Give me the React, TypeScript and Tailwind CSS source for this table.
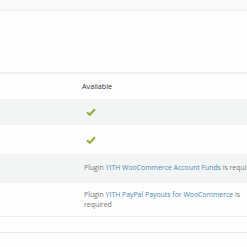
export default function App() {
  const check = (
    <svg width="10" height="8" viewBox="0 0 10 8" className="ml-[4px]">
      <path d="M1 4.2 L3.8 6.8 L9 1.2" fill="none" stroke="#8cb23c" strokeWidth="2" />
    </svg>
  );

  return (
    <div className="w-[247px] h-[247px] overflow-hidden bg-[#fdfdfd] text-[6.9px] antialiased [font-family:'Open_Sans',sans-serif] text-[#777]">
      {/* top bar */}
      <div className="h-[11px] bg-[#f9f9f9] border-b border-[#f1f1f1]" />
      <div className="h-[63px] bg-[#fdfdfd] border-b-2 border-[#f2f2f2]" />

      {/* table */}
      <div className="grid grid-cols-[82px_1fr]">
        <div className="h-[25px]" />
        <div className="h-[25px] flex items-center text-[#333] text-[7.2px]">Available</div>

        <div className="h-[26px] bg-[#f3f5f5] col-span-2 grid grid-cols-[82px_1fr]">
          <div />
          <div className="flex items-center">{check}</div>
        </div>

        <div className="h-[29px] bg-[#fdfdfd] col-span-2 grid grid-cols-[82px_1fr]">
          <div />
          <div className="flex items-center">{check}</div>
        </div>

        <div className="h-[29px] bg-[#f3f5f5] col-span-2 grid grid-cols-[82px_1fr]">
          <div />
          <div className="flex items-center pl-[2px] whitespace-nowrap">
            Plugin&nbsp;<span className="text-[#4a8bb0]">YITH WooCommerce Account Funds</span>&nbsp;is required
          </div>
        </div>

        <div className="h-[34px] bg-[#fdfdfd] col-span-2 grid grid-cols-[82px_1fr] border-b border-[#ededed]">
          <div />
          <div className="flex items-center pl-[2px]">
            <span className="w-[160px] leading-[10px]">
              Plugin <span className="text-[#4a8bb0]">YITH PayPal Payouts for WooCommerce</span> is required
            </span>
          </div>
        </div>

        <div className="h-[16px] col-span-2 bg-[#fdfdfd] border-b border-[#e9e9e9]" />
      </div>
    </div>
  );
}
